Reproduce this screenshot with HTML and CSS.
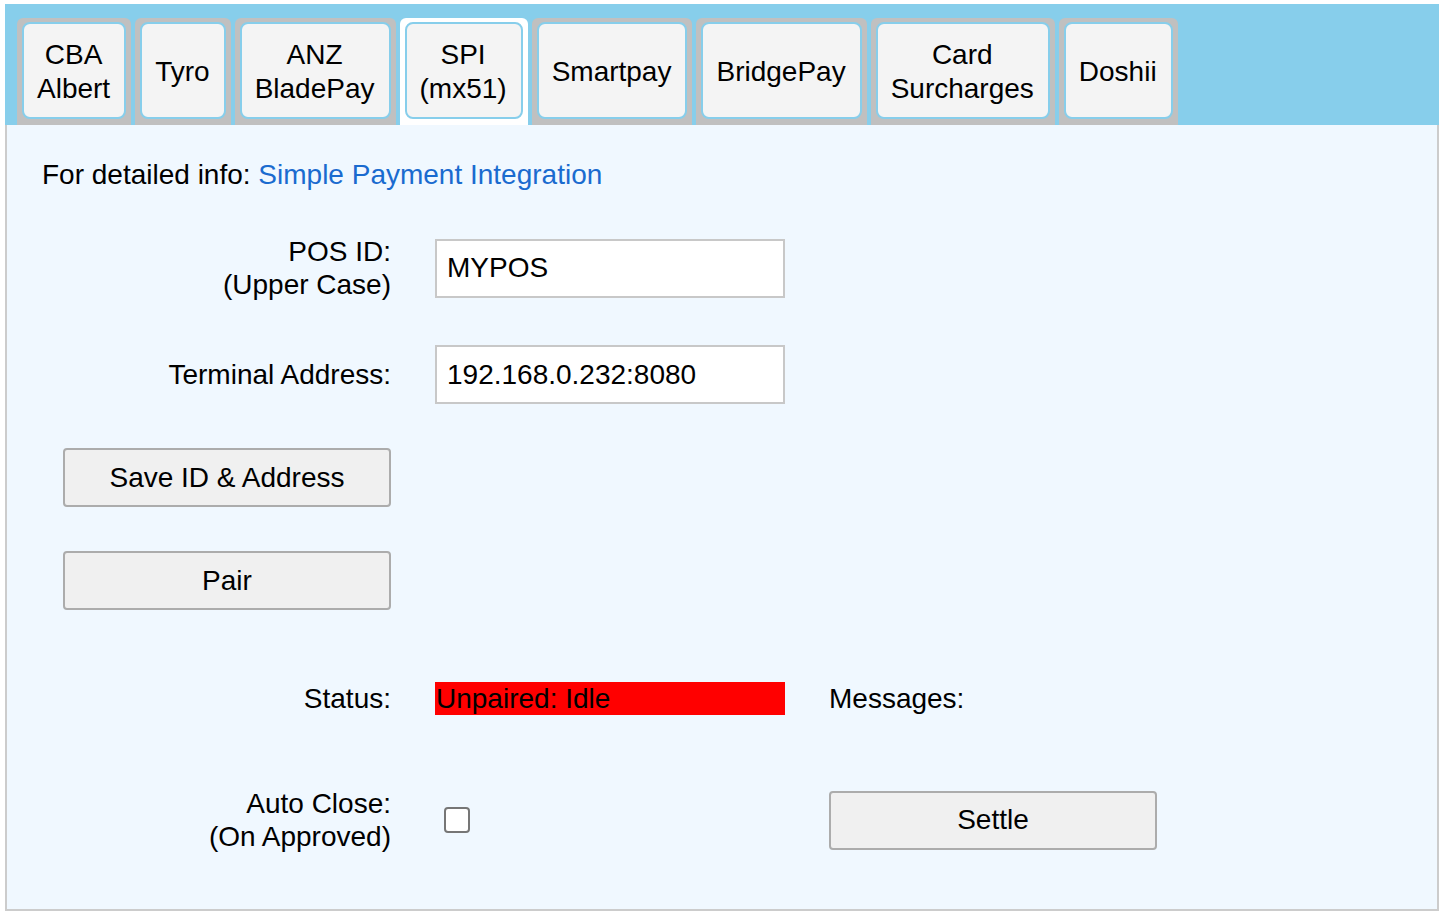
FILE: index.html
```html
<!DOCTYPE html>
<html>
<head>
    <meta charset="UTF-8">
    <title>Payment Integrations</title>
    <link rel="stylesheet" href="styles.css">
</head>
<body>
    <div class="wrapper">
        <ul class="tabs">
            <li><button class="tab-btn">CBA<br>Albert</button></li>
            <li><button class="tab-btn">Tyro</button></li>
            <li><button class="tab-btn">ANZ<br>BladePay</button></li>
            <li class="active"><button class="tab-btn">SPI<br>(mx51)</button></li>
            <li><button class="tab-btn">Smartpay</button></li>
            <li><button class="tab-btn">BridgePay</button></li>
            <li><button class="tab-btn">Card<br>Surcharges</button></li>
            <li><button class="tab-btn">Doshii</button></li>
        </ul>

        <div class="panel">
            <p class="info">For detailed info: <a href="#" class="info-link">Simple Payment Integration</a></p>

            <div class="form-grid">
                <label class="field-label">POS ID:<br>(Upper Case)</label>
                <input type="text" class="text-input" value="MYPOS">
                <div></div>

                <label class="field-label">Terminal Address:</label>
                <input type="text" class="text-input" value="192.168.0.232:8080">
                <div></div>

                <button class="action-btn">Save ID &amp; Address</button>
                <div></div>
                <div></div>

                <button class="action-btn">Pair</button>
                <div></div>
                <div></div>

                <label class="field-label">Status:</label>
                <div class="status unpaired">Unpaired: Idle</div>
                <div class="messages">Messages:</div>

                <label class="field-label">Auto Close:<br>(On Approved)</label>
                <div><input type="checkbox" class="check"></div>
                <button class="action-btn">Settle</button>
            </div>
        </div>
    </div>
</body>
</html>
```

FILE: styles.css
```css
body {
    margin: 0;
    font-family: 'Liberation Sans', Arial, sans-serif;
    color: #000;
}

.wrapper {
    width: 1434px;
    margin: 4px 0 0 5px;
}

/* tab bar */
.tabs {
    display: flex;
    gap: 4px;
    margin: 0;
    padding: 14px 0 0 12px;
    list-style: none;
    background: #87ceeb;
}

.tabs li {
    display: flex;
    padding: 4px 5px 6px 5px;
    background: #c0c0c0;
    border-radius: 6px 6px 0 0;
}

.tabs li.active {
    background: #fff;
}

.tab-btn {
    height: 97px;
    padding: 2px 14px 0 13px;
    font-family: inherit;
    font-size: 28px;
    line-height: 34px;
    color: #000;
    background: #f4f4f4;
    border: 2px solid #87ceeb;
    border-radius: 8px;
    cursor: pointer;
}

/* content */
.panel {
    background: #f0f8ff;
    border: 2px solid #ccc;
    border-top: none;
    padding: 34px 35px 56px;
}

.info {
    margin: 0 0 44px;
    font-size: 28px;
    line-height: 32px;
}

.info-link {
    color: #1a6bcf;
    text-decoration: none;
}

.form-grid {
    display: grid;
    grid-template-columns: 328px 350px 328px;
    grid-template-rows: 66px 59px 59px 59px 89px 66px;
    gap: 44px;
    margin-left: 21px;
    align-items: center;
    font-size: 28px;
}

.field-label {
    text-align: right;
    line-height: 33px;
}

.text-input {
    box-sizing: border-box;
    width: 350px;
    height: 59px;
    padding: 0 10px;
    font-family: inherit;
    font-size: 28px;
    color: #000;
    background: #fff;
    border: 2px solid #c8c8c8;
}

.action-btn {
    height: 59px;
    font-family: inherit;
    font-size: 28px;
    color: #000;
    background: #f0f0f0;
    border: 2px solid #acacac;
    border-radius: 4px;
    cursor: pointer;
}

.status {
    height: 33px;
    line-height: 33px;
    padding-left: 1px;
}

.unpaired {
    background: #f00;
}

.check {
    appearance: none;
    display: block;
    width: 26px;
    height: 26px;
    margin: 0 0 0 9px;
    background: #fff;
    border: 2px solid #767676;
    border-radius: 4px;
}
```
